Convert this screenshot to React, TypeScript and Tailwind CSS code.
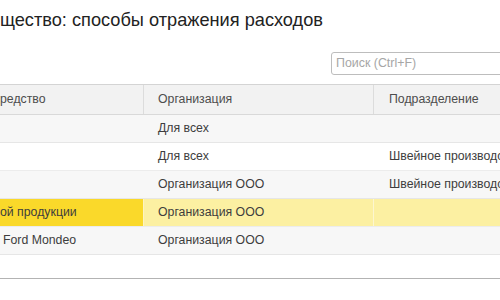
import React from "react";

type Row = { c1: string; c2: string; c3: string; sel?: boolean; pad?: boolean };

const rows: Row[] = [
  { c1: "", c2: "Для всех", c3: "" },
  { c1: "", c2: "Для всех", c3: "Швейное производство" },
  { c1: "", c2: "Организация ООО", c3: "Швейное производство" },
  { c1: "ой продукции", c2: "Организация ООО", c3: "", sel: true },
  { c1: "Ford Mondeo", c2: "Организация ООО", c3: "", pad: true },
];

export default function App() {
  return (
    <div className="w-[500px] h-[300px] bg-white overflow-hidden font-['Liberation_Sans',Arial,sans-serif] flex flex-col">
      <div className="mt-[10px] h-[20px] leading-[20px] text-[18.2px] text-[#222] whitespace-nowrap">
        щество: способы отражения расходов
      </div>
      <div className="mt-[22px] ml-[331px] w-[190px] h-[23px] shrink-0 border border-[#bdbdbd] rounded-[3px] flex items-center pl-[4px] text-[12.4px] text-[#a6a6a6]">
        Поиск (Ctrl+F)
      </div>
      <div className="mt-[9px] border-t border-[#d4d4d4] text-[12.3px]">
        <div className="flex h-[30px] bg-[#f2f2f2] border-b border-[#d9d9d9] text-[#4d4d4d] items-center">
          <div className="w-[144px] shrink-0 h-full flex items-center border-r border-[#dcdcdc]">редство</div>
          <div className="w-[230px] shrink-0 h-full flex items-center pl-[14px] border-r border-[#dcdcdc]">Организация</div>
          <div className="flex-1 h-full flex items-center pl-[15px] whitespace-nowrap">Подразделение</div>
        </div>
        {rows.map((r, i) => (
          <div
            key={i}
            className={
              "flex h-[28px] border-b items-center text-[#3d3d3d] whitespace-nowrap " +
              (r.sel
                ? "bg-[#fcf0a2] border-[#ececec]"
                : i % 2 === 0
                ? "bg-[#f7f7f7] border-[#e6e6e6]"
                : "bg-white border-[#ececec]")
            }
          >
            <div
              className={
                "w-[144px] shrink-0 h-full flex items-center border-r " +
                (r.sel ? "bg-[#fad92a] border-[#fdf3c2]" : "border-transparent") +
                (r.pad ? " pl-[3px]" : "")
              }
            >
              {r.c1}
            </div>
            <div
              className={
                "w-[230px] shrink-0 h-full flex items-center pl-[14px] border-r " +
                (r.sel ? "border-[#fdf6d0]" : "border-transparent")
              }
            >
              {r.c2}
            </div>
            <div className="flex-1 h-full flex items-center pl-[15px] overflow-hidden">{r.c3}</div>
          </div>
        ))}
      </div>
      <div className="mt-[23px] border-t border-[#b3b3b3]" />
    </div>
  );
}
